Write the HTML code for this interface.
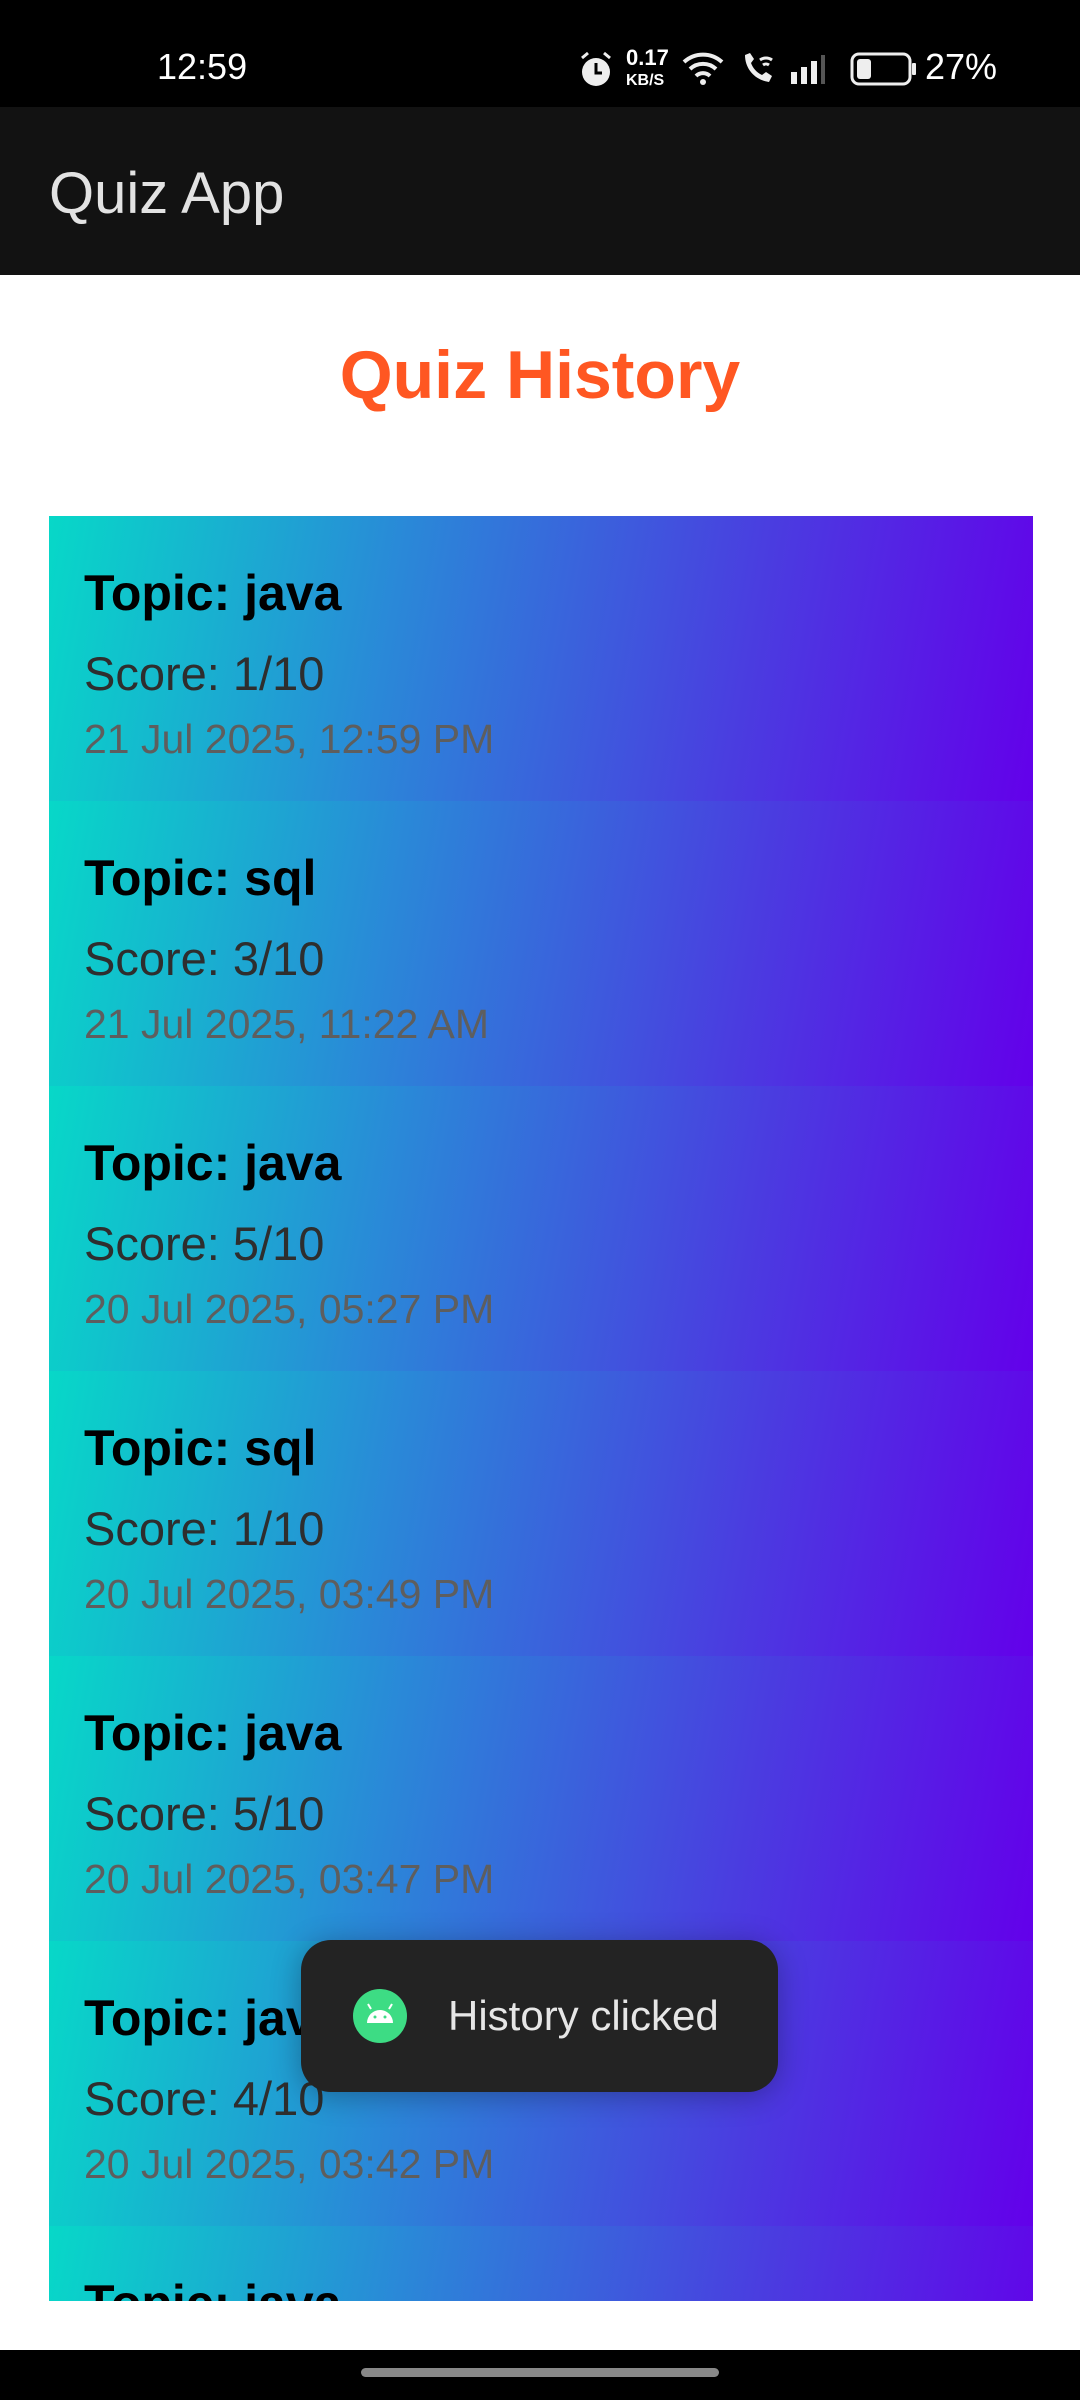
<!DOCTYPE html>
<html><head><meta charset="utf-8"><style>
*{margin:0;padding:0;box-sizing:border-box}
body{width:1080px;height:2400px;position:relative;background:#fff;font-family:"Liberation Sans",Roboto,sans-serif;overflow:hidden}
.sb{position:absolute;left:0;top:0;width:1080px;height:107px;background:#000;color:#fff}
.ab{position:absolute;left:0;top:107px;width:1080px;height:168px;background:#121212}
.ab span{position:absolute;left:49px;top:53px;font-size:58px;color:#e2e2e2}
h1{position:absolute;top:336px;width:1080px;text-align:center;font-size:68px;color:#ff5722;font-weight:bold}
.list{position:absolute;left:49px;top:516px;width:984px;height:1785px;overflow:hidden}
.it{height:285px;background:linear-gradient(100deg,#07d8c8 0%,#2a88d8 35%,#4a3de0 70%,#6300ea 100%);position:relative}
.t{position:absolute;left:35px;top:48px;font-size:50px;font-weight:bold;color:#000}
.s{position:absolute;left:35px;top:130px;font-size:47px;color:#2e2e2e}
.d{position:absolute;left:35px;top:200px;font-size:41px;color:#5e5e5e}
.toast{position:absolute;left:301px;top:1940px;width:477px;height:152px;background:#232323;border-radius:30px;box-shadow:0 4px 30px rgba(0,0,0,.3)}
.toast .ic{position:absolute;left:52px;top:49px;width:54px;height:54px;border-radius:50%;background:#3ddc84}
.toast span{position:absolute;left:147px;top:52px;font-size:42px;color:#e6e6e6}
.nav{position:absolute;left:0;top:2350px;width:1080px;height:50px;background:#000}
.nav div{position:absolute;left:361px;top:18px;width:358px;height:9px;border-radius:5px;background:#888}
</style></head><body>
<div class="sb">
<span style="position:absolute;left:157px;top:46px;font-size:36px">12:59</span>
<svg style="position:absolute;left:578px;top:50px" width="36" height="38" viewBox="0 0 36 38"><circle cx="18" cy="22" r="14" fill="#eee"/><path d="M18 13v10h6" stroke="#000" stroke-width="3" fill="none"/><path d="M4 8l6-5M32 8l-6-5" stroke="#eee" stroke-width="3"/></svg>
<span style="position:absolute;left:626px;top:48px;font-size:22px;font-weight:bold;line-height:20px">0.17<br><span style="font-size:16px">KB/S</span></span>
<svg style="position:absolute;left:682px;top:50px" width="44" height="36" viewBox="0 0 44 36"><path d="M2 12a28 28 0 0 1 38 0M8 19a19 19 0 0 1 26 0M14 26a10 10 0 0 1 14 0" stroke="#eee" stroke-width="4" fill="none"/><circle cx="21" cy="32" r="3" fill="#eee"/></svg>
<svg style="position:absolute;left:740px;top:50px" width="36" height="36" viewBox="0 0 36 36"><path d="M5 5c0 14 10 25 24 27l3-6-6-4-4 3C16 22 13 18 11 13l3-4-4-6z" fill="#eee"/><path d="M20 10a10 10 0 0 1 12 0M23 15a5 5 0 0 1 6 0" stroke="#eee" stroke-width="3" fill="none"/></svg>
<svg style="position:absolute;left:790px;top:54px" width="44" height="30" viewBox="0 0 44 30"><rect x="1" y="18" width="6" height="12" fill="#eee"/><rect x="11" y="13" width="6" height="17" fill="#eee"/><rect x="21" y="7" width="6" height="23" fill="#eee"/><rect x="31" y="1" width="4" height="29" fill="#555"/></svg>
<svg style="position:absolute;left:850px;top:52px" width="68" height="34" viewBox="0 0 68 34"><rect x="2" y="2" width="58" height="30" rx="7" stroke="#eee" stroke-width="3" fill="none"/><rect x="7" y="7" width="14" height="20" rx="3" fill="#eee"/><rect x="62" y="11" width="4" height="12" rx="1" fill="#eee"/></svg>
<span style="position:absolute;left:925px;top:46px;font-size:36px">27%</span>
</div>
<div class="ab"><span>Quiz App</span></div>
<h1>Quiz History</h1>
<div class="list">
<div class="it"><div class="t">Topic: java</div><div class="s">Score: 1/10</div><div class="d">21 Jul 2025, 12:59 PM</div></div>
<div class="it"><div class="t">Topic: sql</div><div class="s">Score: 3/10</div><div class="d">21 Jul 2025, 11:22 AM</div></div>
<div class="it"><div class="t">Topic: java</div><div class="s">Score: 5/10</div><div class="d">20 Jul 2025, 05:27 PM</div></div>
<div class="it"><div class="t">Topic: sql</div><div class="s">Score: 1/10</div><div class="d">20 Jul 2025, 03:49 PM</div></div>
<div class="it"><div class="t">Topic: java</div><div class="s">Score: 5/10</div><div class="d">20 Jul 2025, 03:47 PM</div></div>
<div class="it"><div class="t">Topic: java</div><div class="s">Score: 4/10</div><div class="d">20 Jul 2025, 03:42 PM</div></div>
<div class="it"><div class="t">Topic: java</div><div class="s">Score: 4/10</div><div class="d">20 Jul 2025, 03:40 PM</div></div>
</div>
<div class="toast"><div class="ic"><svg width="54" height="54" viewBox="0 0 54 54"><path d="M14 34a13 13 0 0 1 26 0z" fill="#fff"/><path d="M18 20l-3-5M36 20l3-5" stroke="#fff" stroke-width="2"/><circle cx="22" cy="28" r="1.5" fill="#3ddc84"/><circle cx="32" cy="28" r="1.5" fill="#3ddc84"/></svg></div><span>History clicked</span></div>
<div class="nav"><div></div></div>
</body></html>
